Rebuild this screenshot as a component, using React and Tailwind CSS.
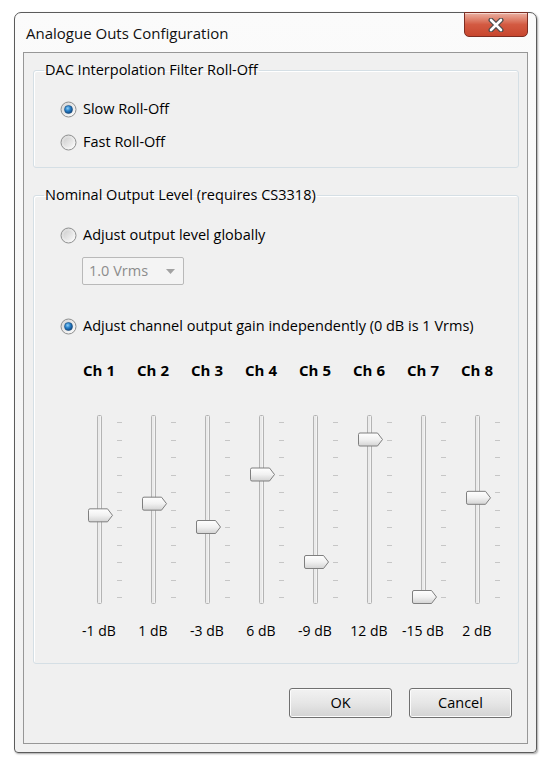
import React from 'react';

const channels = [
  { id: 1, db: -1 },
  { id: 2, db: 1 },
  { id: 3, db: -3 },
  { id: 4, db: 6 },
  { id: 5, db: -9 },
  { id: 6, db: 12 },
  { id: 7, db: -15 },
  { id: 8, db: 2 },
];

const ticks = Array.from({ length: 11 }, (_, i) => Math.round(7 + i * 17.5));

const Radio = ({ checked, label }) => (
  <div className="flex items-center h-5">
    <svg width="17" height="17" viewBox="0 0 17 17" className="shrink-0">
      <defs>
        <linearGradient id="rOuter" x1="0" y1="0" x2="1" y2="1">
          <stop offset="0" stopColor="#d4d4d4" />
          <stop offset="1" stopColor="#ffffff" />
        </linearGradient>
        <linearGradient id="rInner" x1="0" y1="0" x2="1" y2="1">
          <stop offset="0" stopColor="#cfcfcf" />
          <stop offset="1" stopColor="#f6f6f6" />
        </linearGradient>
        <radialGradient id="rDot" cx="0.4" cy="0.35" r="0.7">
          <stop offset="0" stopColor="#8fd0f7" />
          <stop offset="0.45" stopColor="#2a83cc" />
          <stop offset="1" stopColor="#0c3f78" />
        </radialGradient>
      </defs>
      <circle cx="8.5" cy="8.5" r="7.5" fill="url(#rOuter)" stroke="#8e8f8f" />
      <circle cx="8.5" cy="8.5" r="5" fill="url(#rInner)" />
      {checked && <circle cx="8.5" cy="8.5" r="4" fill="url(#rDot)" stroke="#1b4f80" strokeWidth="0.6" />}
    </svg>
    <span className="ml-[6px]">{label}</span>
  </div>
);

const Slider = ({ db }) => {
  const y = 7 + ((15 - db) * 175) / 30;
  return (
    <svg width="54" height="189" viewBox="0 0 54 189" className="block">
      <defs>
        <linearGradient id="thumbFill" x1="0" y1="0" x2="0" y2="1">
          <stop offset="0" stopColor="#ffffff" />
          <stop offset="0.5" stopColor="#f1f1f1" />
          <stop offset="1" stopColor="#d3d3d3" />
        </linearGradient>
      </defs>
      <rect x="25.5" y="0.5" width="4" height="188" rx="1" fill="#f3f3f3" stroke="#b4b4b4" />
      <line x1="27" y1="1" x2="27" y2="188" stroke="#e2e2e2" />
      {ticks.map((t) => (
        <rect key={t} x="45" y={t} width="5" height="1" fill="#c6c6c6" />
      ))}
      <g transform={`translate(16 ${y - 7})`}>
        <path
          d="M2 0.5 H19.5 L24.5 7 L19.5 13.5 H2 Q0.5 13.5 0.5 12 V2 Q0.5 0.5 2 0.5 Z"
          fill="url(#thumbFill)"
          stroke="#7f7f7f"
        />
      </g>
    </svg>
  );
};

const Button = ({ children }) => (
  <button className="w-[103px] h-[30px] rounded-[3px] border border-[#707070] bg-gradient-to-b from-[#f2f2f2] via-[#e6e6e6] to-[#d3d3d3] shadow-[inset_0_0_0_1px_#fcfcfc] text-[14.5px] text-black">
    {children}
  </button>
);

const App = () => {
  return (
    <div className="w-[548px] h-[762px] bg-white pt-[12px] pl-[14px] font-['Open_Sans',sans-serif] text-[14.5px] text-black">
      <div className="w-[523px] h-[741px] flex flex-col rounded-t-[7px] rounded-b-[4px] border border-[#5b5b5b] bg-gradient-to-b from-[#fbfbfb] to-[#f1f1f1] shadow-[1px_1px_2px_rgba(0,0,0,0.35)]">
        <div className="h-[39px] flex items-start justify-between">
          <div className="pl-[11px] pt-[10px] leading-5 text-[15px] text-[#111]">
            Analogue Outs Configuration
          </div>
          <div className="-mt-[1px] mr-[8px] w-[64px] h-[25px] flex items-center justify-center rounded-b-[5px] border border-[#7d2d22] bg-gradient-to-b from-[#eab0a2] via-[#d35a42] to-[#c8462e] shadow-[inset_0_1px_0_rgba(255,255,255,0.5)]">
            <svg width="16" height="14" viewBox="0 0 16 14">
              <path d="M3 2 L13 12 M13 2 L3 12" stroke="#4d4d4d" strokeWidth="5" strokeLinecap="round" />
              <path d="M3 2 L13 12 M13 2 L3 12" stroke="#ffffff" strokeWidth="2.6" strokeLinecap="round" />
            </svg>
          </div>
        </div>

        <div className="mx-[8px] mb-[8px] flex-1 border border-[#979797] bg-[#f0f0f0] pl-[9px] pr-[8px]">
          <fieldset className="mt-[7px] rounded-[3px] border border-[#d5dfe5] shadow-[inset_1px_1px_0_#fff]">
            <legend className="ml-[10px] px-[1px] leading-5">DAC Interpolation Filter Roll-Off</legend>
            <div className="pl-[26px] pt-[19px] pb-[15px] flex flex-col gap-[13px]">
              <Radio checked label="Slow Roll-Off" />
              <Radio label="Fast Roll-Off" />
            </div>
          </fieldset>

          <fieldset className="mt-[17px] rounded-[3px] border border-[#d5dfe5] shadow-[inset_1px_1px_0_#fff]">
            <legend className="ml-[10px] px-[1px] leading-5">Nominal Output Level (requires CS3318)</legend>
            <div className="pt-[20px] pb-[22px]">
              <div className="pl-[26px]">
                <Radio label="Adjust output level globally" />
              </div>
              <div className="ml-[48px] mt-[12px] w-[102px] h-[28px] flex items-center justify-between rounded-[2px] border border-[#b9b9b9] bg-[#f4f4f4] pl-[6px] pr-[8px] text-[#8c8c8c]">
                <span>1.0 Vrms</span>
                <svg width="9" height="5" viewBox="0 0 9 5">
                  <path d="M0 0 H9 L4.5 5 Z" fill="#a2a2a2" />
                </svg>
              </div>
              <div className="pl-[26px] mt-[31px]">
                <Radio checked label="Adjust channel output gain independently (0 dB is 1 Vrms)" />
              </div>

              <div className="ml-[38px] mt-[24px] grid grid-cols-[repeat(8,54px)]">
                {channels.map((c) => (
                  <div key={c.id} className="flex flex-col items-center">
                    <div className="leading-5 text-[15px] font-bold">Ch {c.id}</div>
                    <div className="mt-[35px]">
                      <Slider db={c.db} />
                    </div>
                    <div className="mt-[17px] leading-5 text-[14px] whitespace-nowrap">{c.db} dB</div>
                  </div>
                ))}
              </div>
            </div>
          </fieldset>

          <div className="mt-[24px] mr-[7px] flex justify-end gap-[17px]">
            <Button>OK</Button>
            <Button>Cancel</Button>
          </div>
        </div>
      </div>
    </div>
  );
};

export default App;
